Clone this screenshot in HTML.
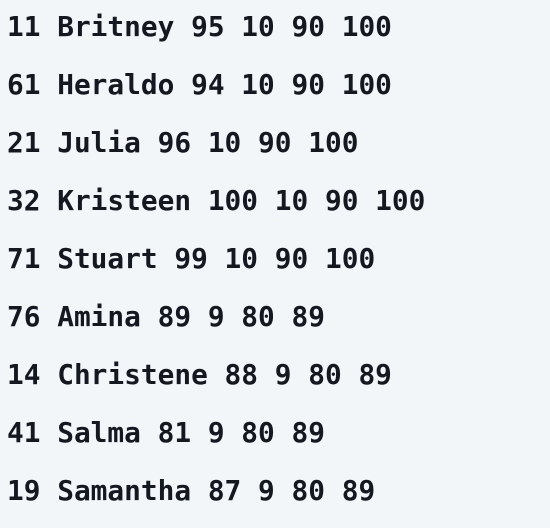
<!DOCTYPE html>
<html><head><style>
html,body{margin:0;padding:0;background:#f3f6f8;width:550px;height:528px;overflow:hidden}
.w{position:absolute;left:7px;top:-2px;font-family:"DejaVu Sans Mono","Liberation Mono",monospace;font-weight:bold;font-size:27.8px;line-height:58px;color:#141821;white-space:pre}
</style></head><body><div class="w">11 Britney 95 10 90 100
61 Heraldo 94 10 90 100
21 Julia 96 10 90 100
32 Kristeen 100 10 90 100
71 Stuart 99 10 90 100
76 Amina 89 9 80 89
14 Christene 88 9 80 89
41 Salma 81 9 80 89
19 Samantha 87 9 80 89</div></body></html>
